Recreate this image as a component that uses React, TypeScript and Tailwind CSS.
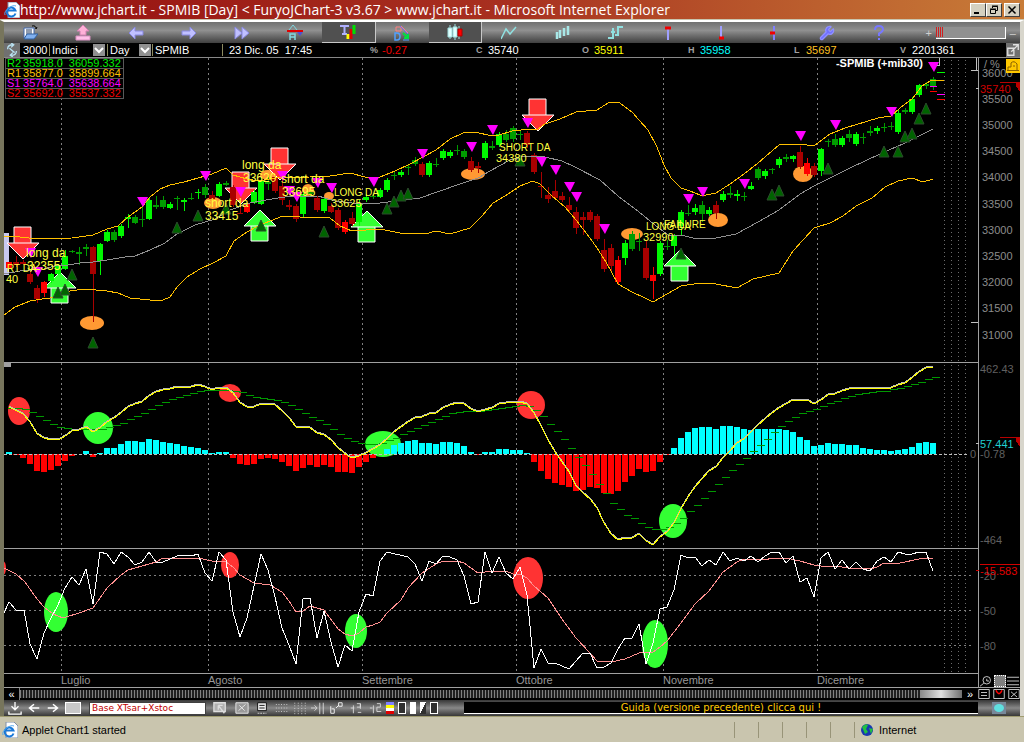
import React from "react";
import { Wrench } from "lucide-react";

type Point = [number, number];
// high, low, top, bottom, colour key
type Candle = [number, number, number, number, string];

const FIRST_X = 9;
const STEP = 7;

const candleColors: Record<string, string> = {
  G: "#00f800",
  g: "#009c00",
  R: "#ff0000",
  r: "#a80000",
};

const candles: Candle[] = [
  [262, 268, 262, 268, "R"], [256, 267, 262, 265, "r"], [260, 265, 262, 264, "r"], [270, 284, 274, 282, "r"],
  [285, 303, 288, 299, "r"], [281, 297, 282, 293, "R"], [273, 283, 274, 281, "G"], [264, 275, 265, 274, "G"],
  [250, 270, 256, 269, "G"], [250, 253, 251, 252, "g"], [247, 265, 252, 254, "g"], [244, 256, 247, 249, "g"],
  [246, 322, 247, 274, "r"], [243, 275, 244, 261, "G"], [230, 242, 232, 241, "G"], [230, 242, 232, 240, "g"],
  [224, 238, 226, 236, "G"], [214, 228, 217, 219, "G"], [215, 224, 217, 223, "g"], [207, 227, 219, 220, "g"],
  [198, 220, 200, 219, "G"], [196, 209, 205, 207, "g"], [196, 209, 200, 207, "g"], [202, 209, 204, 208, "G"],
  [196, 210, 198, 199, "g"], [198, 211, 200, 202, "G"], [193, 200, 198, 199, "g"], [189, 199, 192, 193, "G"],
  [184, 198, 187, 195, "g"], [191, 200, 195, 199, "r"], [182, 197, 184, 196, "G"], [181, 186, 183, 185, "g"],
  [185, 207, 187, 205, "r"], [200, 214, 213, 214, "r"], [202, 213, 204, 212, "R"], [190, 204, 192, 203, "G"],
  [178, 205, 180, 204, "G"], [175, 190, 182, 184, "g"], [175, 193, 177, 191, "r"], [180, 205, 186, 200, "r"],
  [200, 210, 205, 207, "r"], [204, 222, 206, 219, "r"], [192, 217, 194, 214, "G"], [190, 196, 192, 194, "g"],
  [196, 212, 198, 210, "r"], [197, 213, 199, 211, "G"], [203, 213, 206, 212, "r"], [208, 230, 210, 228, "r"],
  [220, 234, 222, 232, "R"], [212, 226, 218, 224, "r"], [200, 226, 203, 222, "G"], [194, 202, 197, 200, "G"],
  [194, 199, 196, 197, "g"], [188, 198, 190, 197, "G"], [178, 192, 180, 190, "G"], [172, 180, 175, 176, "g"],
  [170, 177, 172, 175, "G"], [164, 175, 167, 168, "g"], [157, 166, 160, 164, "g"], [162, 177, 164, 175, "r"],
  [161, 177, 163, 175, "G"], [158, 167, 164, 165, "g"], [149, 160, 151, 158, "G"], [150, 158, 152, 156, "G"],
  [145, 155, 150, 151, "g"], [149, 159, 151, 157, "g"], [157, 172, 161, 170, "r"], [162, 173, 166, 168, "r"],
  [141, 160, 143, 158, "G"], [141, 150, 146, 148, "g"], [132, 147, 134, 145, "G"], [130, 142, 134, 140, "g"],
  [126, 142, 128, 139, "g"], [130, 140, 134, 135, "g"], [131, 148, 133, 145, "r"], [153, 174, 155, 172, "r"],
  [172, 198, 186, 187, "r"], [187, 203, 195, 199, "r"], [180, 200, 191, 198, "r"], [192, 202, 196, 200, "r"],
  [197, 213, 205, 210, "r"], [207, 234, 212, 228, "r"], [212, 235, 217, 220, "r"], [210, 222, 212, 220, "r"],
  [214, 241, 216, 239, "r"], [239, 272, 250, 269, "r"], [244, 272, 248, 266, "r"], [256, 284, 260, 282, "R"],
  [240, 265, 243, 258, "G"], [231, 251, 234, 249, "g"], [233, 251, 241, 242, "g"], [240, 280, 248, 278, "r"],
  [267, 299, 275, 281, "R"], [241, 276, 243, 274, "G"], [240, 250, 246, 247, "g"], [234, 255, 236, 246, "G"],
  [210, 235, 212, 226, "G"], [205, 216, 213, 214, "g"], [204, 215, 208, 212, "G"], [201, 222, 205, 214, "g"],
  [207, 216, 210, 214, "G"], [201, 219, 205, 213, "r"], [191, 202, 194, 200, "G"], [186, 198, 193, 195, "g"],
  [190, 201, 194, 196, "G"], [192, 201, 196, 197, "g"], [182, 190, 186, 189, "G"], [167, 180, 169, 178, "g"],
  [169, 179, 171, 176, "G"], [168, 174, 169, 170, "g"], [157, 168, 159, 165, "G"], [154, 162, 157, 159, "g"],
  [155, 162, 156, 159, "G"], [146, 169, 152, 167, "r"], [158, 176, 163, 174, "R"], [163, 177, 166, 175, "r"],
  [148, 176, 149, 171, "G"], [139, 147, 141, 142, "g"], [134, 147, 139, 145, "g"], [136, 147, 138, 145, "G"],
  [130, 142, 134, 138, "g"], [132, 146, 134, 144, "G"], [133, 144, 137, 138, "g"], [126, 136, 131, 133, "g"],
  [126, 134, 128, 131, "G"], [123, 132, 127, 128, "g"], [122, 130, 126, 127, "g"], [110, 134, 113, 132, "G"],
  [108, 114, 110, 112, "g"], [97, 114, 99, 112, "G"], [84, 97, 85, 95, "G"], [82, 89, 84, 86, "g"], [77, 90, 79, 87, "g"],
];

const histogram = [
  2, -1, -4, -10, -17, -18, -16, -12, -7, -2, 0, 3, -3, 1, 6, 6, 10, 13, 13, 12, 15, 14, 12, 11, 10, 8, 7, 6, 4, 1, 2, 2,
  -4, -10, -11, -10, -5, -4, -5, -8, -12, -17, -14, -11, -13, -11, -13, -18, -18, -19, -13, -8, -4, 0, 5, 9, 11, 13, 14,
  11, 11, 10, 12, 12, 11, 8, 2, -1, 2, 2, 5, 5, 4, 4, 1, -8, -17, -25, -29, -31, -33, -37, -36, -33, -34, -39, -40, -37,
  -28, -22, -15, -18, -17, -8, -1, 6, 16, 22, 26, 27, 27, 25, 28, 28, 27, 25, 24, 25, 25, 25, 25, 24, 22, 17, 14, 8, 9,
  11, 10, 10, 9, 9, 6, 5, 4, 4, 3, 4, 5, 7, 11, 12, 11,
];

const signal = [
  408, 408, 409, 412, 416, 420, 424, 427, 428, 429, 429, 429, 429, 429, 427, 425, 423, 419, 416, 413, 409, 405, 402,
  399, 397, 395, 393, 391, 390, 390, 390, 390, 391, 392, 395, 397, 398, 399, 400, 402, 405, 409, 413, 417, 420, 424,
  429, 434, 438, 441, 443, 444, 444, 443, 440, 438, 434, 431, 428, 425, 422, 419, 416, 413, 412, 411, 411, 411, 410,
  409, 408, 407, 406, 405, 406, 410, 416, 424, 431, 439, 448, 457, 465, 474, 484, 493, 503, 509, 515, 518, 523, 527,
  529, 529, 527, 523, 518, 511, 505, 498, 491, 484, 477, 470, 464, 458, 451, 445, 439, 432, 426, 421, 417, 413, 411,
  409, 406, 403, 401, 398, 396, 394, 393, 392, 391, 391, 389, 388, 386, 384, 382, 379, 377,
];

const upperBand =
  "4,236 20,237 37,239 72,238 93,235 107,229 118,226 128,217 142,207 150,197 160,189 170,185 184,182 198,178 212,174 226,168 233,175 247,179 258,181 275,178 310,177 330,176 350,173 365,177 380,177 395,171 410,164 436,150 450,139 463,133 475,132 492,136 499,135 512,131 530,129 538,129 545,124 560,119 576,112 597,110 608,103 614,102 620,103 632,112 639,120 648,130 657,147 664,165 671,178 681,188 690,191 700,195 706,195 716,193 730,184 744,174 758,163 765,157 779,145 800,144 814,146 830,134 845,128 878,118 891,116 900,108 912,99 922,86 930,81 944,80";
const middleBand =
  "4,274 20,271 44,269 58,265 68,265 80,263 93,262 107,260 125,257 135,256 150,250 165,243 177,234 195,225 215,219 230,210 250,203 272,199 285,197 318,196 335,201 352,203 380,203 420,198 440,191 460,184 478,178 490,171 510,160 525,156 545,157 562,161 575,167 600,180 618,196 639,212 655,225 668,235 685,236 693,238 716,238 736,234 758,222 779,210 800,194 814,186 850,168 880,154 905,143 933,129";
const lowerBand =
  "4,315 15,307 30,301 42,299 58,297 70,291 85,289 107,291 118,293 130,298 150,300 163,300 170,297 177,287 187,277 200,269 213,263 226,256 234,241 247,232 258,226 265,223 283,216 300,217 330,218 340,226 352,231 380,229 400,233 425,234 436,231 450,234 470,228 482,216 493,203 505,196 520,186 533,181 540,184 552,196 565,207 576,220 590,238 597,248 606,262 618,284 632,292 645,298 653,302 660,298 681,286 700,283 716,284 737,288 753,279 779,273 793,251 814,228 830,223 843,216 856,206 872,198 885,187 898,181 912,178 923,182 933,179";
const macdLine =
  "9,407 23,414 30,422 37,434 44,438 51,440 60,439 67,435 72,431 79,430 86,427 93,432 100,428 107,422 114,418 121,413 128,407 135,404 142,402 149,396 156,392 163,390 170,389 177,387 191,387 198,385 205,387 212,390 219,388 226,388 233,393 240,403 247,407 254,407 261,404 270,404 275,405 282,411 289,418 296,427 303,427 310,428 317,433 324,435 331,440 338,448 348,456 352,458 359,456 366,453 373,449 380,445 387,439 394,432 401,427 408,422 415,418 422,417 429,414 436,413 443,408 450,405 457,403 464,404 471,409 478,412 485,410 492,408 499,404 506,403 520,402 527,404 534,413 541,426 548,440 555,452 562,462 569,472 576,486 583,493 590,499 597,508 604,523 611,534 618,540 625,538 632,538 639,534 646,541 653,545 660,537 667,532 674,523 681,509 688,497 695,487 702,479 709,471 716,467 723,458 730,451 737,443 744,439 751,432 758,425 765,419 772,413 779,408 786,404 793,400 807,400 814,404 821,400 828,395 835,394 842,391 849,389 856,388 891,388 898,385 905,383 912,378 919,372 926,368 933,367";
const stochLine =
  "4,613 9,602 16,610 24,610 30,644 37,659 44,633 51,618 58,605 65,588 72,577 79,585 86,569 93,604 100,552 107,554 114,564 121,552 128,557 135,565 142,562 149,552 156,562 163,562 170,559 177,556 184,555 191,556 198,554 205,573 212,581 219,552 226,560 233,612 240,637 247,618 254,586 261,554 268,570 275,597 282,628 289,645 296,664 303,599 310,598 317,638 324,611 331,642 338,667 345,645 352,651 359,612 366,594 373,596 380,561 387,552 408,557 415,564 422,581 429,561 436,564 443,556 450,557 457,560 464,576 471,604 478,602 485,552 492,573 499,557 506,573 513,579 520,567 527,595 534,668 541,649 548,663 555,663 569,669 576,661 583,653 590,653 597,668 604,667 611,663 618,649 625,638 632,638 639,624 646,664 653,643 660,609 667,607 674,590 681,555 688,558 695,557 702,566 709,560 716,565 723,552 730,561 737,558 744,561 751,556 758,562 765,556 772,552 779,552 786,563 793,556 800,582 807,578 814,597 821,558 828,552 835,569 842,560 849,569 856,562 863,569 870,571 877,561 884,557 891,562 898,552 905,554 912,554 919,552 926,552 933,571";
const stochAverage =
  "4,568 16,574 25,582 37,599 44,607 53,614 63,618 79,613 93,608 107,588 121,575 128,570 142,566 156,562 163,558 170,559 184,558 198,558 212,561 226,562 233,567 240,575 254,583 270,585 282,592 289,601 296,612 303,611 310,606 324,610 338,629 345,634 352,636 359,633 366,627 373,625 380,622 387,613 401,600 408,588 422,573 436,564 443,561 457,561 464,563 478,573 492,571 506,571 513,574 520,574 527,578 534,586 548,598 562,619 576,638 590,653 597,661 611,662 625,659 639,653 653,652 660,647 667,641 674,632 681,623 695,604 709,591 723,572 737,562 744,559 765,560 772,558 786,558 800,561 814,565 821,566 835,566 849,568 870,569 877,567 884,563 900,563 919,559 933,558";

const sellMarks: Point[] = [
  [30, 248], [37, 267], [142, 197], [205, 171], [240, 187], [282, 171], [289, 186], [296, 192], [317, 178], [331, 183],
  [373, 177], [422, 149], [471, 142], [492, 125], [527, 118], [541, 157], [555, 165], [569, 182], [576, 192],
  [604, 224], [688, 194], [702, 187], [744, 179], [800, 131], [835, 120], [891, 107], [933, 62],
];
const buyMarks: Point[] = [
  [58, 287], [65, 284], [72, 269], [93, 337], [177, 222], [198, 210], [226, 203], [261, 220], [324, 226], [387, 203],
  [394, 196], [401, 190], [408, 188], [520, 155], [681, 248], [772, 189], [779, 185], [828, 163], [884, 146],
  [898, 146], [905, 131], [912, 128], [919, 113], [926, 103],
];
const downArrows: Point[] = [[22, 227], [240, 172], [279, 148], [537, 99]];
const upArrows: Point[] = [[59, 272], [259, 210], [366, 211], [679, 250]];
const spots = [
  [92, 323, 12, 7], [213, 203, 9, 6], [268, 175, 8, 5], [308, 190, 6, 6], [329, 196, 5, 4],
  [473, 174, 12, 6], [632, 234, 11, 6], [718, 220, 10, 7], [803, 174, 10, 8],
];
const notes: [number, number, string, number][] = [
  [7, 272, "RT DA", 10], [6, 283, "40", 11], [26, 257, "long da", 12], [27, 270, "32355", 12],
  [205, 207, "short da", 12], [205, 220, "33415", 12], [242, 169, "long da", 12], [243, 182, "33620", 12],
  [281, 183, "short da", 12], [282, 196, "33695", 12], [334, 196, "LONG DA", 10], [331, 207, "33625", 11],
  [499, 151, "SHORT DA", 10], [496, 162, "34380", 11], [646, 230, "LONG DA", 10], [643, 241, "32990", 11],
  [664, 228, "FAILURE", 10],
];
const priceLabels = [
  "36000", "35500", "35000", "34500", "34000", "33500", "33000", "32500", "32000", "31500", "31000",
];
const months: [number, string][] = [
  [61, "Luglio"], [208, "Agosto"], [362, "Settembre"], [516, "Ottobre"], [663, "Novembre"], [817, "Dicembre"],
];

const levels = [
  ["R2", "35918.0", "36059.332", "text-[#00f000]"],
  ["R1", "35877.0", "35899.664", "text-[#ffc000]"],
  ["S1", "35764.0", "35638.664", "text-[#ff00ff]"],
  ["S2", "35692.0", "35537.332", "text-[#f00000]"],
];

const Grid = ({ top, bottom }: { top: number; bottom: number }) => (
  <g fill="none" strokeWidth="1" shapeRendering="crispEdges">
    {months.map(([x]) => (
      <line key={x} x1={x + 0.5} x2={x + 0.5} y1={top} y2={bottom} stroke="#808080" strokeDasharray="2 3" />
    ))}
    {[944, 951, 958, 965].map((x) => (
      <line key={x} x1={x + 0.5} x2={x + 0.5} y1={top + 2} y2={bottom} stroke="#6c6c6c" strokeDasharray="1 3" />
    ))}
    <line x1="978.5" x2="978.5" y1={top} y2={bottom} stroke="#a0a0a0" />
    <line x1="4" x2="978" y1={bottom - 0.5} y2={bottom - 0.5} stroke="#a0a0a0" />
  </g>
);

const Flag = ({ y }: { y: number }) => (
  <path d={`M1000 ${y}h20v10l-4 -6v-3h-16z`} fill="#b80000" shapeRendering="crispEdges" />
);

const PriceChart = () => (
  <svg viewBox="4 58 1016 305" className="block w-full" role="img" aria-label="SPMIB price">
    <Grid top={58} bottom={363} />
    <rect x="4" y="233" width="5" height="42" fill="#c8c8f0" />
    {spots.map(([cx, cy, rx, ry]) => (
      <ellipse key={cx} cx={cx} cy={cy} rx={rx} ry={ry} fill="#ff9933" />
    ))}
    {downArrows.map(([x, y]) => (
      <path
        key={x}
        d={`M${x - 8} ${y}h17v16h8l-16 16l-16 -16h7z M${x - 8} ${y + 16}h17`}
        fill="#ff3333"
        stroke="#fff"
      />
    ))}
    {upArrows.map(([x, y]) => (
      <path
        key={x}
        d={`M${x - 8} ${y + 31}h17v-15h8l-16 -16l-16 16h7z M${x - 8} ${y + 16}h17`}
        fill="#33ff33"
        stroke="#fff"
      />
    ))}
    <g shapeRendering="crispEdges">
      {candles.map(([high, low, top, bottom, kind], i) => {
        const x = FIRST_X + i * STEP;
        return (
          <g key={x} fill={candleColors[kind]}>
            <rect x={x} y={high} width="1" height={low - high} />
            <rect x={x - 3} y={top} width="6" height={Math.max(bottom - top, 1)} />
          </g>
        );
      })}
    </g>
    <g fill="none" stroke="#ffc000" shapeRendering="crispEdges">
      <polyline points={upperBand} />
      <polyline points={lowerBand} />
      <polyline points={middleBand} stroke="#909090" />
    </g>
    {buyMarks.map(([x, y]) => (
      <path key={x} d={`M${x} ${y}l5 11h-10z`} fill="#006400" stroke="#2c4a2c" strokeWidth="1" />
    ))}
    {sellMarks.map(([x, y]) => (
      <path key={x} d={`M${x - 5} ${y}h11l-5 10z`} fill="#ff00ff" />
    ))}
    <g fill="#ffff40">
      {notes.map(([x, y, text, size]) => (
        <text key={`${x}-${y}`} x={x} y={y} fontSize={size}>
          {text}
        </text>
      ))}
    </g>
    <g shapeRendering="crispEdges">
      <path d="M937 72.500h8" stroke="#00ff00" />
      <path d="M930 86.500h7M937 94.500h8" stroke="#ff00ff" />
      <path d="M930 91.500h7M937 99.500h8" stroke="#ff0000" />
      <path d="M939.500 58v7M937 65.500h3M971 70.500h7M976.500 58v12M976 88.500h3M971 322.500h7" stroke="#c0c0c0" />
    </g>
    <text x="923" y="67" textAnchor="end" fontSize="11" fontWeight="bold" fill="#fff">
      -SPMIB (+mib30)
    </text>
    <g fontSize="11" fill="#8c8c8c">
      <text x="984" y="68">/ %</text>
      {priceLabels.map((label, i) => (
        <text key={label} x="982" y={77 + i * 26 + Math.floor(i / 5)}>
          {label}
        </text>
      ))}
    </g>
    <Flag y={82} />
    <text x="980" y="93" fontSize="11" fill="#d00000">
      35740
    </text>
    <g>
      <rect x="1006" y="59" width="14" height="14" fill="#ffc800" />
      <path d="M1008 70v-3h3v-4q3 -3 6 1v6M1007 70.500h12M1013 66h2" fill="none" stroke="#886000" />
    </g>
  </svg>
);

const MacdChart = () => (
  <svg viewBox="4 363 1016 186" className="block w-full" role="img" aria-label="MACD">
    <Grid top={363} bottom={549} />
    <rect x="4" y="363" width="7" height="4" fill="#a0a0a0" />
    <ellipse cx="19" cy="411" rx="11" ry="14" fill="#ff3333" />
    <ellipse cx="230" cy="393" rx="11" ry="9" fill="#ff3333" />
    <ellipse cx="531" cy="405" rx="14" ry="14" fill="#ff3333" />
    <ellipse cx="98" cy="428" rx="15" ry="16" fill="#33ff33" />
    <ellipse cx="383" cy="444" rx="18" ry="13" fill="#33ff33" />
    <ellipse cx="673" cy="521" rx="14" ry="17" fill="#33ff33" />
    <g shapeRendering="crispEdges">
      {histogram.map((value, i) => (
        <rect
          key={i}
          x={FIRST_X - 3 + i * STEP}
          y={value > 0 ? 454 - value : 454}
          width="6"
          height={Math.abs(value)}
          fill={value > 0 ? "#00ffff" : "#ff0000"}
        />
      ))}
      <line x1="4" x2="967" y1="454.500" y2="454.500" stroke="#c0c0c0" strokeDasharray="3 2" />
      {signal.map((y, i) => (
        <rect key={i} x={FIRST_X + i * STEP - 1} y={y} width="8" height="1" fill="#009800" />
      ))}
    </g>
    <g fill="none" shapeRendering="crispEdges">
      <polyline points={macdLine} stroke="#b8b8b8" transform="translate(0 -1)" />
      <polyline points={macdLine} stroke="#ffff00" />
    </g>
    <g fontSize="11" fill="#606060">
      <text x="980" y="373">462.43</text>
      <text x="970" y="458">0</text>
      <text x="980" y="458">-0.78</text>
      <text x="980" y="544">-464</text>
    </g>
    <Flag y={437} />
    <path d="M976 443.500h3" stroke="#c0c0c0" />
    <text x="980" y="448" fontSize="11" fill="#20d0d0">
      57.441
    </text>
  </svg>
);

const StochChart = () => (
  <svg viewBox="4 549 1016 125" className="block w-full" role="img" aria-label="Stochastic">
    <Grid top={549} bottom={674} />
    {[575, 610, 645].map((y) => (
      <line key={y} x1="4" x2="974" y1={y + 0.5} y2={y + 0.5} stroke="#808080" strokeDasharray="2 3" shapeRendering="crispEdges" />
    ))}
    <g fill="#ff3333">
      <ellipse cx="3" cy="568" rx="3" ry="7" />
      <ellipse cx="230" cy="565" rx="9" ry="13" />
      <ellipse cx="528" cy="578" rx="15" ry="21" />
    </g>
    <g fill="#33ff33">
      <ellipse cx="56" cy="612" rx="12" ry="20" />
      <ellipse cx="356" cy="631" rx="11" ry="17" />
      <ellipse cx="655" cy="644" rx="13" ry="24" />
    </g>
    <g fill="none" shapeRendering="crispEdges">
      <polyline points={stochAverage} stroke="#ff9090" />
      <polyline points={stochLine} stroke="#fff" />
    </g>
    <path d="M980 564.500h40M976 570.500h3" stroke="#d00000" shapeRendering="crispEdges" />
    <g fontSize="11" fill="#606060">
      <text x="980" y="580">-20</text>
      <text x="980" y="615">-50</text>
      <text x="980" y="650">-80</text>
    </g>
    <text x="980" y="575" fontSize="11" fill="#e00000">
      -15.583
    </text>
  </svg>
);

const Ico = ({ children, size = 16 }: { children: React.ReactNode; size?: number }) => (
  <svg width={size} height={size} viewBox="0 0 16 16" fill="none" stroke="#fff" aria-hidden="true">
    {children}
  </svg>
);

const IeLogo = () => (
  <svg className="shrink-0" width="16" height="16" viewBox="0 0 16 16" fill="none" aria-hidden="true">
    <path d="M4 0h8l4 4v12H4z" fill="#fff" stroke="#8090a8" />
    <path d="M11.500 11.500A4.500 4.500 0 1 1 11.500 8.500H4" stroke="#1878d8" strokeWidth="2" />
    <path d="M1 13C-1 9 8 2 12 4" stroke="#50a8f0" />
  </svg>
);

const tools: { name: string; pressed?: boolean; icon: React.ReactNode }[] = [
  { name: "Open", icon: <><path d="M2 13V3h10v9z" fill="#fff" stroke="#4068b0" /><path d="M4 5h6M4 7h6M4 9h6" stroke="#203860" /><path d="M2 14l3-5h11l-4 5z" fill="#80b0f0" stroke="#3060a0" /><path d="M10 1q4-1 4 3l1-2" stroke="#000" /></> },
  { name: "Up", icon: <><path d="M8 0l6 6h-3v4H5V6H2z" fill="#ffb0d8" stroke="#d080b0" /><path d="M1 11h14v4H1z" fill="#ffc0e8" stroke="#d890c0" /></> },
  { name: "Back", icon: <path d="M1 8l6-6v4h8v4H7v4z" fill="#c0c0ff" stroke="#8888e0" /> },
  { name: "Forward", icon: <path d="M15 8L9 2v4H1v4h8v4z" fill="#c0c0ff" stroke="#8888e0" /> },
  { name: "Fast forward", icon: <path d="M1 2l7 6-7 6zM8 2l7 6-7 6z" fill="#c0c0ff" stroke="#8888e0" /> },
  { name: "Levels", icon: <><path d="M0 6h16" stroke="#e00000" strokeWidth="2" /><path d="M2 5l4-5 4 5" stroke="#80d8e0" /><path d="M3 15V9h5v6M3 12h5" stroke="#80d8e0" strokeWidth="1.500" /><path d="M10 7h6l-3 4z" fill="#5050d0" stroke="none" /></> },
  { name: "Text tool", pressed: true, icon: <><path d="M0 2h9M4.500 2v8M2 10h5" stroke="#b0b0ff" strokeWidth="2" /><path d="M8 10v5" stroke="#ff0" strokeWidth="3" /><path d="M11 5v10" stroke="#e00000" strokeWidth="3" /><path d="M14 1v9" stroke="#00e000" strokeWidth="3" /></> },
  { name: "Draw", icon: <><path d="M2 2h5v4H2zM7 1l7 7" stroke="#ff8080" /><path d="M6 1l9 9" stroke="#6070ff" /><path d="M1 8v7h2q3 0 3-3.500T3 8z" stroke="#50a0ff" strokeWidth="1.500" /><path d="M9 8l5 5M14 9v4h-4" stroke="#00e040" strokeWidth="2" /><path d="M9 15h6" stroke="#50a0ff" /></> },
  { name: "Candles", pressed: true, icon: <><path d="M3 1v14M8 0v16M12 2v13" stroke="#a0e0e0" /><path d="M1 4h4v9H1zM6 3h4v10H6z" fill="#e0ffff" stroke="#a0e0e0" /><path d="M11 5h4v7h-4z" fill="#ff0000" stroke="#a00" /></> },
  { name: "Line", icon: <path d="M0 14l5-10 4 5 6-7" stroke="#90e0e0" strokeWidth="1.500" /> },
  { name: "Bars", icon: <path d="M3 7v7M6 5v8M10 3v8M14 1v9" stroke="#a8e8e8" strokeWidth="2.500" /> },
  { name: "Steps", icon: <path d="M1 13h5V3M4 7h4M8 10h3V2h5" stroke="#90e0e0" strokeWidth="2" /> },
  { name: "Marker top", icon: <><path d="M8 4v11" stroke="#a0a0ff" strokeWidth="2" /><path d="M5 3h6" stroke="#f00000" strokeWidth="3" /></> },
  { name: "Marker bottom", icon: <><path d="M8 1v12" stroke="#a0a0ff" strokeWidth="2" /><path d="M6 13h5" stroke="#f00000" strokeWidth="3" /></> },
  { name: "Marker middle", icon: <><path d="M8 1v14" stroke="#8080ff" strokeWidth="2" /><path d="M4 8h5" stroke="#f00000" strokeWidth="3" /></> },
  { name: "Settings", icon: <Wrench size={16} color="#9090ff" fill="#7070ff" /> },
  { name: "Help", icon: <path d="M4 5q0-4 4-4t4 3.500q0 2-4 4V11M8 13v2" stroke="#7878ff" strokeWidth="2" /> },
];

const quotes = [
  ["%", "-0.27", "text-[#f00000]"],
  ["C", "35740", "text-white"],
  ["O", "35911", "text-[#ffff00]"],
  ["H", "35958", "text-[#00ffff]"],
  ["L", "35697", "text-[#ffc020]"],
  ["V", "2201361", "text-white"],
];

const DropDown = ({ label, value, className }: { label: string; value: string; className: string }) => (
  <div className={`relative flex shrink-0 items-center border-l border-[#8c8a60] ${className}`}>
    <select aria-label={label} className="w-full appearance-none bg-black pl-0.5 text-[11px] leading-3 text-white outline-none">
      <option>{value}</option>
    </select>
    <svg className="pointer-events-none absolute right-0" width="12" height="12" viewBox="0 0 12 12" aria-hidden="true">
      <rect width="12" height="12" fill="#909090" />
      <path d="M2 4l4 4 4-4" fill="none" stroke="#fff" strokeWidth="2" />
    </svg>
  </div>
);

const WindowButton = ({ label, className, children }: { label: string; className?: string; children: React.ReactNode }) => (
  <button
    aria-label={label}
    className={`flex h-[14px] w-4 items-center justify-center border border-t-white border-r-[#404040] border-b-[#404040] border-l-white bg-[#d4d0c0] ${className ?? ""}`}
  >
    <svg width="10" height="10" viewBox="0 0 10 10" fill="none" stroke="#000" aria-hidden="true">
      {children}
    </svg>
  </button>
);

const bottomTools: { name: string; width: string; icon: React.ReactNode }[] = [
  { name: "Select", width: "w-7", icon: <path d="M1 2h13v10H1zM6 5l7 9M6 5v5M6 5h5" fill="#b0b0b0" stroke="#ddd" strokeWidth="1.500" /> },
  { name: "Zoom area", width: "w-4", icon: <path d="M1 2h14v12H1zM4 11l8-7M5 5l6 6" fill="#999" stroke="#eee" /> },
  { name: "Notes", width: "w-6", icon: <><path d="M3 2h10v9H3z" fill="#eee" stroke="#000" /><path d="M5 5h6M5 8h6" stroke="#000" /><path d="M3 14h10" stroke="#ddd" strokeDasharray="2 1" /></> },
  { name: "Rows", width: "w-4", icon: <path d="M1 4h14M1 8h14M1 12h14" stroke="#ddd" strokeDasharray="1 2" /> },
  { name: "Columns", width: "w-5", icon: <path d="M2 2v13M6 2v13M10 2v13M14 2v13" stroke="#ddd" strokeDasharray="1 2" /> },
  { name: "Shift", width: "w-4", icon: <path d="M0 8h6M4 5l3 3-3 3M10 2v13M14 2v13" stroke="#ddd" /> },
  { name: "Link", width: "w-5", icon: <path d="M2 6v8h4V9H3M8 8l3-3M11 2h4v4h-4z" stroke="#fff" /> },
  { name: "Interval 19", width: "w-5", icon: <path d="M2 8h4M5 5v9M9 3h4v4H9M13 3v6M10 13h4" stroke="#ddd" /> },
  { name: "Interval 12", width: "w-5", icon: <path d="M1 8h3M5 5v9M9 3h4v4H9v5h5" stroke="#ddd" /> },
];

const App: React.FC = () => {
  return (
    <div className="flex min-h-screen flex-col bg-[#c9c5ae] font-['Liberation_Sans',sans-serif] text-[11px] leading-3">
      <header className="flex h-[19px] items-center bg-linear-to-r from-[#960c10] via-[#a83020] to-[#c87c38] px-1">
        <IeLogo />
        <h1 className="min-w-0 flex-1 truncate font-['Open_Sans',sans-serif] text-[14px] leading-[18px] font-medium text-white">
          http://www.jchart.it - SPMIB [Day] &lt; FuryoJChart-3 v3.67 &gt; www.jchart.it - Microsoft Internet Explorer
        </h1>
        <WindowButton label="Minimize">
          <path d="M1 8h5" strokeWidth="2" />
        </WindowButton>
        <WindowButton label="Restore">
          <path d="M3.500 3V1.500h5v4H7M1.500 4.500h5v4h-5zM1 4h6M3 1h6" />
        </WindowButton>
        <WindowButton label="Close" className="ml-0.5">
          <path d="M1.500 1.500l7 7M8.500 1.500l-7 7" strokeWidth="1.500" />
        </WindowButton>
      </header>

      <main className="mt-px border-x-4 border-t-2 border-t-white border-r-[#d8d6cc] border-l-[#77755c] bg-black">
        <nav className="flex h-[21px] items-stretch bg-linear-to-b from-[#707070] via-[#909090] via-40% to-[#404040]">
          {tools.map(({ name, pressed, icon }) => (
            <button
              key={name}
              aria-label={name}
              className={`flex flex-1 items-center justify-center ${
                pressed ? "border-r border-b border-[#c8c8c8] bg-[#505050]" : ""
              }`}
            >
              <Ico>{icon}</Ico>
            </button>
          ))}
          <div className="flex w-[114px] shrink-0 items-center justify-end gap-1 pr-1 text-[#d0d0d0]">
            <span>+</span>
            <input
              type="range"
              aria-label="Zoom"
              defaultValue={0}
              className="h-3 w-[70px] appearance-none border-r border-b border-white bg-[#909090] bg-[repeating-linear-gradient(90deg,#d02020_0_1px,transparent_1px_2px)] bg-[length:8px_10px] bg-no-repeat [&::-webkit-slider-thumb]:appearance-none"
            />
            <span>–</span>
          </div>
        </nav>

        <div className="flex h-[15px] items-center border-b border-[#888] text-white">
          <button aria-label="Refresh" className="flex w-4 justify-center bg-[#707070]">
            <Ico size={14}>
              <path d="M3 7q0-5 6-5M7 0l3 2-3 3M13 9q0 5-6 5M9 11l-3 3 3 2M5 6l6 5" stroke="#b8e0f0" strokeWidth="1.500" />
            </Ico>
          </button>
          <span className="w-[29px] shrink-0 pl-[3px]">3000</span>
          <DropDown label="Market" value="Indici" className="w-14" />
          <DropDown label="Period" value="Day" className="ml-0.5 w-11" />
          <span className="ml-px w-[70px] shrink-0 border-l border-[#8c8a60] pl-0.5">SPMIB</span>
          <span className="w-[148px] shrink-0 border-l border-[#8c8a60] pl-1.5 whitespace-pre">23 Dic. 05  17:45</span>
          {quotes.map(([key, value, color]) => (
            <span key={key} className="flex flex-1 items-center gap-1">
              <span className="w-2 text-[9px] font-bold text-[#a0a0a0]">{key}</span>
              <span className={color}>{value}</span>
            </span>
          ))}
          <button aria-label="Detach" className="flex w-[14px] justify-center bg-[#707070]">
            <Ico size={14}>
              <path d="M2 6h7v8H2zM6 10l7-7M8 2h6v6" stroke="#e0e0e0" strokeWidth="1.500" />
            </Ico>
          </button>
        </div>

        <section className="relative">
          <PriceChart />
          <table className="absolute top-0 left-px border-collapse">
            <tbody>
              {levels.map(([name, value, next, color]) => (
                <tr key={name} className={`border border-[#585858] leading-[9px] ${color}`}>
                  <td className="p-0 pl-px">{name}</td>
                  <td className="p-0 pl-0.5">{value}</td>
                  <td className="p-0 pr-0.5 pl-1.5">{next}</td>
                </tr>
              ))}
            </tbody>
          </table>
        </section>
        <MacdChart />
        <StochChart />

        <div className="flex h-[13px]">
          <svg viewBox="4 674 974 13" className="block min-w-0 flex-1" aria-label="Months">
            <g fontSize="11" fill="#989898">
              {months.map(([x, label]) => (
                <text key={label} x={x} y="684">
                  {label}
                </text>
              ))}
            </g>
          </svg>
          <div className="flex w-[42px] shrink-0 items-center justify-between border-l border-[#a0a0a0] px-px">
            <button aria-label="Search">
              <Ico size={12}>
                <circle cx="9" cy="7" r="5" />
                <path d="M9 5v3h3M5 11l-5 4" />
              </Ico>
            </button>
            <button aria-label="Pattern" className="h-3 w-3 border border-dotted border-white bg-[#808080]" />
            <button aria-label="List">
              <Ico size={12}>
                <path d="M0 3h16M0 8h16M0 13h16" />
              </Ico>
            </button>
          </div>
        </div>

        <div className="flex h-[13px] border-t border-[#a0a0a0] text-white">
          <button aria-label="Scroll left" className="w-4 border-r border-[#808080]">«</button>
          <div className="my-0.5 flex-1 bg-[repeating-linear-gradient(90deg,#808080_0_1px,#202020_1px_3px)]" />
          <div className="my-0.5 w-[42px] bg-linear-to-r from-[#888] via-[#e0e0e0] to-[#707070]" />
          <button aria-label="Scroll right" className="w-4">»</button>
          <div className="flex w-[42px] items-center justify-between">
            <button aria-label="Window"><Ico size={12}><path d="M1 2h14v12H1zM4 10h8M4 6h8" /></Ico></button>
            <button aria-label="Alarm"><Ico size={12}><path d="M1 2h14v12H1z" /><path d="M4 3q4 9 8 0" stroke="#f00" strokeWidth="2" /></Ico></button>
            <button aria-label="Close panel"><Ico size={12}><path d="M1 2h14v12H1zM4 5l8 7M12 5l-8 7" /></Ico></button>
          </div>
        </div>

        <div className="flex h-4 items-center bg-linear-to-b from-[#383838] via-[#888] to-[#383838]">
          <div className="flex w-[85px] shrink-0 items-center justify-between pl-1 pr-2">
            <button aria-label="Download"><Ico size={14}><path d="M8 1v8M4 6l4 4 4-4M1 12v3h14v-3" strokeWidth="1.500" /></Ico></button>
            <button aria-label="Previous"><Ico size={12}><path d="M15 8H3M8 3L2 8l6 5" strokeWidth="2" /></Ico></button>
            <button aria-label="Next"><Ico size={12}><path d="M1 8h12M8 3l6 5-6 5" strokeWidth="2" /></Ico></button>
            <button aria-label="Stop" className="h-3 w-4 border border-white bg-[#c8c8c8]" />
          </div>
          <input
            aria-label="Template"
            defaultValue="Base XTsar+Xstoc"
            className="h-[13px] w-[117px] shrink-0 border border-[#404040] bg-white pl-0.5 font-['DejaVu_Sans',sans-serif] text-[9px] leading-3 text-[#c00000] outline-none"
          />
          <div className="flex w-[258px] shrink-0 items-center">
            {bottomTools.map(({ name, width, icon }) => (
              <button key={name} aria-label={name} className={`flex justify-center ${width}`}>
                <Ico size={14}>{icon}</Ico>
              </button>
            ))}
            <button aria-label="Colours" className="h-3 w-2 bg-[linear-gradient(#8080ff_25%,#ffff00_25%_50%,#fff_50%_75%,#e00000_75%)]" />
            <button aria-label="Empty" className="ml-1 h-3 w-2 border border-white bg-[#303030]" />
            <button aria-label="Filled" className="ml-1 h-3 w-1.5 bg-white" />
            <button aria-label="Half" className="ml-1 h-3 w-1.5 bg-linear-to-br from-white from-50% to-[#303030] to-50%" />
            <button aria-label="Outline" className="ml-1 h-3 w-2 border border-white bg-[#303030]" />
          </div>
          <a href="#guida" className="h-3 flex-1 border-b border-white bg-black text-center font-['DejaVu_Sans',sans-serif] text-[10px] leading-[11px] text-[#ffc800]">
            Guida (versione precedente) clicca qui !
          </a>
          <div className="flex w-[42px] justify-center">
            <svg width="14" height="12" viewBox="0 0 14 12" aria-hidden="true">
              <rect width="14" height="12" fill="#789" />
              <ellipse cx="7" cy="6" rx="5" ry="4" fill="#60e0e0" />
            </svg>
          </div>
        </div>
      </main>

      <footer className="flex flex-1 items-center border-t border-[#a09c70] px-0.5 text-black">
        <IeLogo />
        <span className="flex-1 pl-1">Applet Chart1 started</span>
        <div className="flex h-4">
          {[1, 2, 3, 4, 5].map((n) => (
            <span key={n} className="w-6 border-l border-[#989478]" />
          ))}
        </div>
        <div className="flex h-4 w-[168px] items-center gap-1 border-l border-[#989478] pl-1">
          <svg width="16" height="16" viewBox="0 0 16 16" aria-hidden="true">
            <circle cx="8" cy="8" r="6" fill="#1838b0" />
            <path d="M3 5q4-4 6-2l-2 4 2 3-3 2zM10 6l4 1-2 5z" fill="#20c040" />
          </svg>
          <span>Internet</span>
        </div>
      </footer>
    </div>
  );
};

export default App;
